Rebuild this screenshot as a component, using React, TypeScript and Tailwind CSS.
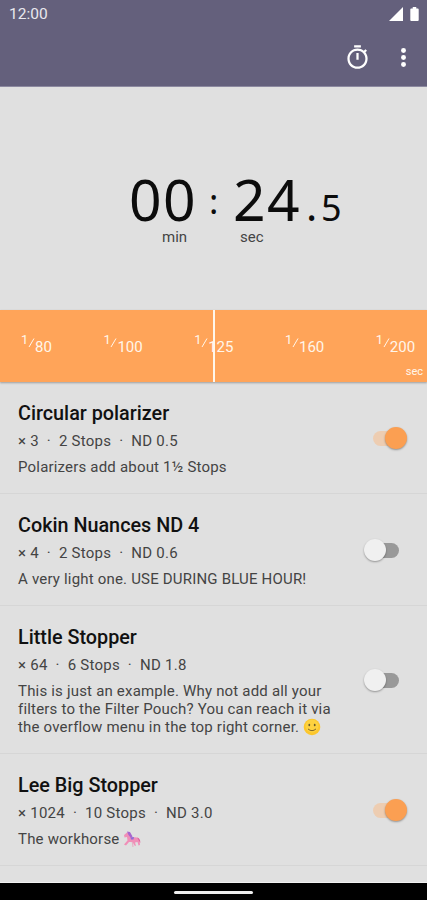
import React from "react"
import clsx from "clsx"

type Filter = {
  id: number
  name: string
  factor: number
  stops: number
  density: string
  note: string
  emoji?: "smile" | "horse"
  enabled: boolean
}

const initialFilters: Filter[] = [
  { id: 1, name: "Circular polarizer", factor: 3, stops: 2, density: "0.5", note: "Polarizers add about 1½ Stops", enabled: true },
  { id: 2, name: "Cokin Nuances ND 4", factor: 4, stops: 2, density: "0.6", note: "A very light one. USE DURING BLUE HOUR!", enabled: false },
  {
    id: 3,
    name: "Little Stopper",
    factor: 64,
    stops: 6,
    density: "1.8",
    note: "This is just an example. Why not add all your filters to the Filter Pouch? You can reach it via the overflow menu in the top right corner.",
    emoji: "smile",
    enabled: false,
  },
  { id: 4, name: "Lee Big Stopper", factor: 1024, stops: 10, density: "3.0", note: "The workhorse", emoji: "horse", enabled: true },
]

const shutterSpeeds = ["80", "100", "125", "160", "200"]

export default function App() {
  const [filters, setFilters] = React.useState(initialFilters)

  const handleToggle = (id: number) => {
    setFilters(filters.map((f) => (f.id === id ? { ...f, enabled: !f.enabled } : f)))
  }

  return (
    <div className="flex h-[900px] w-[427px] flex-col overflow-hidden bg-[#e0e0e0] font-['Roboto',sans-serif] text-[#111]">
      {/* Header */}
      <header className="h-[87px] shrink-0 border-b border-[#8c89a0] bg-[#64607c] text-white">
        <div className="flex h-7 items-center justify-between pl-[9px] pr-[8px]">
          <span className="text-[15.5px] leading-7 text-[#e9e8ee]">12:00</span>
          <div className="flex items-center gap-[7px]">
            <svg width="14" height="14" viewBox="0 0 14 14" fill="currentColor">
              <path d="M14 0v14H0z" />
            </svg>
            <svg width="9" height="14" viewBox="0 0 9 15" fill="currentColor">
              <path d="M2.6 0h3.8v1.6H8a1 1 0 0 1 1 1V14a1 1 0 0 1-1 1H1a1 1 0 0 1-1-1V2.600a1 1 0 0 1 1-1h1.600z" />
            </svg>
          </div>
        </div>
        <div className="flex h-[58px] items-center justify-end gap-[19px] pr-[10px]">
          <button aria-label="Timer">
            <TimerIcon />
          </button>
          <button aria-label="More options">
            <svg width="27" height="27" viewBox="0 0 24 24" fill="currentColor">
              <circle cx="12" cy="5.800" r="2.200" />
              <circle cx="12" cy="12" r="2.200" />
              <circle cx="12" cy="18.200" r="2.200" />
            </svg>
          </button>
        </div>
      </header>

      {/* Exposure time */}
      <section className="h-[223px] shrink-0 pl-[129px] pt-[84px]">
        <div className="flex h-[56px] items-baseline font-['Noto_Sans',sans-serif] leading-[56px] text-[#0c0c0c]">
          <span className="h-[56px] w-[80px] text-[57px] tracking-[1.5px]">00</span>
          <span className="h-[56px] w-[24px] -translate-y-[7px] text-[35px]">:</span>
          <span className="h-[56px] w-[73px] text-[57px] tracking-[1.5px]">24</span>
          <span className="h-[56px] w-[15px] text-[42px]">.</span>
          <span className="h-[56px] text-[36px]">5</span>
        </div>
        <div className="flex text-[15px] leading-5 text-[#444]">
          <span className="w-[78px] pl-[33px]">min</span>
          <span className="pl-[33px]">sec</span>
        </div>
      </section>

      {/* Shutter speed scale */}
      <section className="relative h-[72px] shrink-0 bg-[#ffa459] text-[#fff6ea] shadow-[0_1px_2px_rgba(0,0,0,0.3)]">
        <div className="flex gap-[51.5px] pl-[21px] pt-[27px]">
          {shutterSpeeds.map((speed) => (
            <Fraction key={speed} value={speed} />
          ))}
        </div>
        <div className="absolute inset-y-0 left-[213px] w-[2px] bg-[#fff6ea]" />
        <span className="absolute bottom-[2px] right-[4px] text-[11px] leading-4">sec</span>
      </section>

      {/* Filters */}
      <main className="min-h-0 flex-1">
        {filters.map((filter) => (
          <div key={filter.id} className="flex items-center justify-between border-b border-[#d6d6d6] pb-[17px] pl-[18px] pr-[20px] pt-[19px]">
            <div className="w-[325px]">
              <h2 className="pt-px text-[19.8px] font-medium leading-[23px]">{filter.name}</h2>
              <p className="mt-[6px] whitespace-pre text-[15px] leading-5 tracking-[0.25px] text-[#444]">
                {`× ${filter.factor}  ·  ${filter.stops} Stops  ·  ND ${filter.density}`}
              </p>
              <p className="mt-[7px] text-[15px] leading-[18px] tracking-[0.19px] text-[#444]">
                {filter.note}
                {filter.emoji === "smile" && <SmileEmoji />}
                {filter.emoji === "horse" && <HorseEmoji />}
              </p>
            </div>
            <Toggle checked={filter.enabled} onChange={() => handleToggle(filter.id)} />
          </div>
        ))}
      </main>

      {/* Navigation bar */}
      <footer className="flex h-[18px] shrink-0 justify-center border-t border-[#f0f0f0] bg-black pt-[8px]">
        <div className="h-[3px] w-[79px] rounded-full bg-[#eee]" />
      </footer>
    </div>
  )
}

function Fraction({ value }: { value: string }) {
  return (
    <div className="flex text-[15px] leading-5">
      <span className="-mt-[7px] w-[6px] text-[13px]">1</span>
      <svg className="ml-px mt-px" width="7" height="10" viewBox="0 0 7 10" fill="none" stroke="currentColor" strokeWidth="1">
        <path d="M6 .5L1 9" />
      </svg>
      <span>{value}</span>
    </div>
  )
}

function Toggle({ checked, onChange }: { checked: boolean; onChange: () => void }) {
  return (
    <button role="switch" aria-checked={checked} onClick={onChange} className="relative flex h-[23px] w-[43px] items-center justify-center">
      <span className={clsx("h-[15px] w-[26px] rounded-full", checked ? "bg-[#edcdb2]" : "bg-[#999]")} />
      <span
        className={clsx(
          "absolute top-0 size-[22px] rounded-full shadow-[0_1px_2px_rgba(0,0,0,0.35)]",
          checked ? "right-0 bg-[#fb9f52]" : "left-0 bg-[#f0f0f0]"
        )}
      />
    </button>
  )
}

function TimerIcon() {
  return (
    <svg width="27" height="27" viewBox="0 0 24 24" fill="currentColor">
      <path d="M15 1H9v2h6V1zm-4 13h2V8h-2v6zm8.030-6.610l1.420-1.420c-.43-.51-.9-.99-1.410-1.410l-1.420 1.420C16.070 4.740 14.120 4 12 4c-4.970 0-9 4.030-9 9s4.020 9 9 9 9-4.030 9-9c0-2.120-.74-4.070-1.970-5.610zM12 20c-3.870 0-7-3.130-7-7s3.130-7 7-7 7 3.130 7 7-3.130 7-7 7z" />
    </svg>
  )
}

function SmileEmoji() {
  return (
    <svg className="ml-[4px] inline-block align-[-4px]" width="18" height="18" viewBox="0 0 18 18">
      <circle cx="9" cy="9" r="8.300" fill="#fcc62c" />
      <circle cx="9" cy="8" r="6.500" fill="#fdd23f" />
      <ellipse cx="6.300" cy="7" rx="0.900" ry="1.300" fill="#6b5a2c" />
      <ellipse cx="11.700" cy="7" rx="0.900" ry="1.300" fill="#6b5a2c" />
      <path d="M5.300 11.200Q9 14.400 12.700 11.200" fill="none" stroke="#80642a" strokeWidth="1" strokeLinecap="round" />
    </svg>
  )
}

function HorseEmoji() {
  return (
    <svg className="ml-[4px] inline-block align-[-4px]" width="18" height="18" viewBox="0 0 18 18">
      <path d="M9 10L10 17" stroke="#e3b3c4" strokeWidth="1.200" />
      <path d="M1 5L4 2.500L7 3L9 7L14 7.500L16.500 10L17 15L15.500 15.500L14.500 12L12 12.500L13 16L11.500 15.500L9.500 12L6 12L3 15.500L1 14.500L4.500 10.500L4 7L1.500 7.500z" fill="#f08fb8" />
      <path d="M4 1.500L7 2L9.500 6.500L8 8L5.500 5z" fill="#a766cf" />
      <path d="M14 7.500Q17.500 8 17.300 13L15.500 10z" fill="#e2609d" />
      <path d="M7.500 7.500L11 7L10.500 9.500L8 9.500z" fill="#8f6bd6" />
    </svg>
  )
}
